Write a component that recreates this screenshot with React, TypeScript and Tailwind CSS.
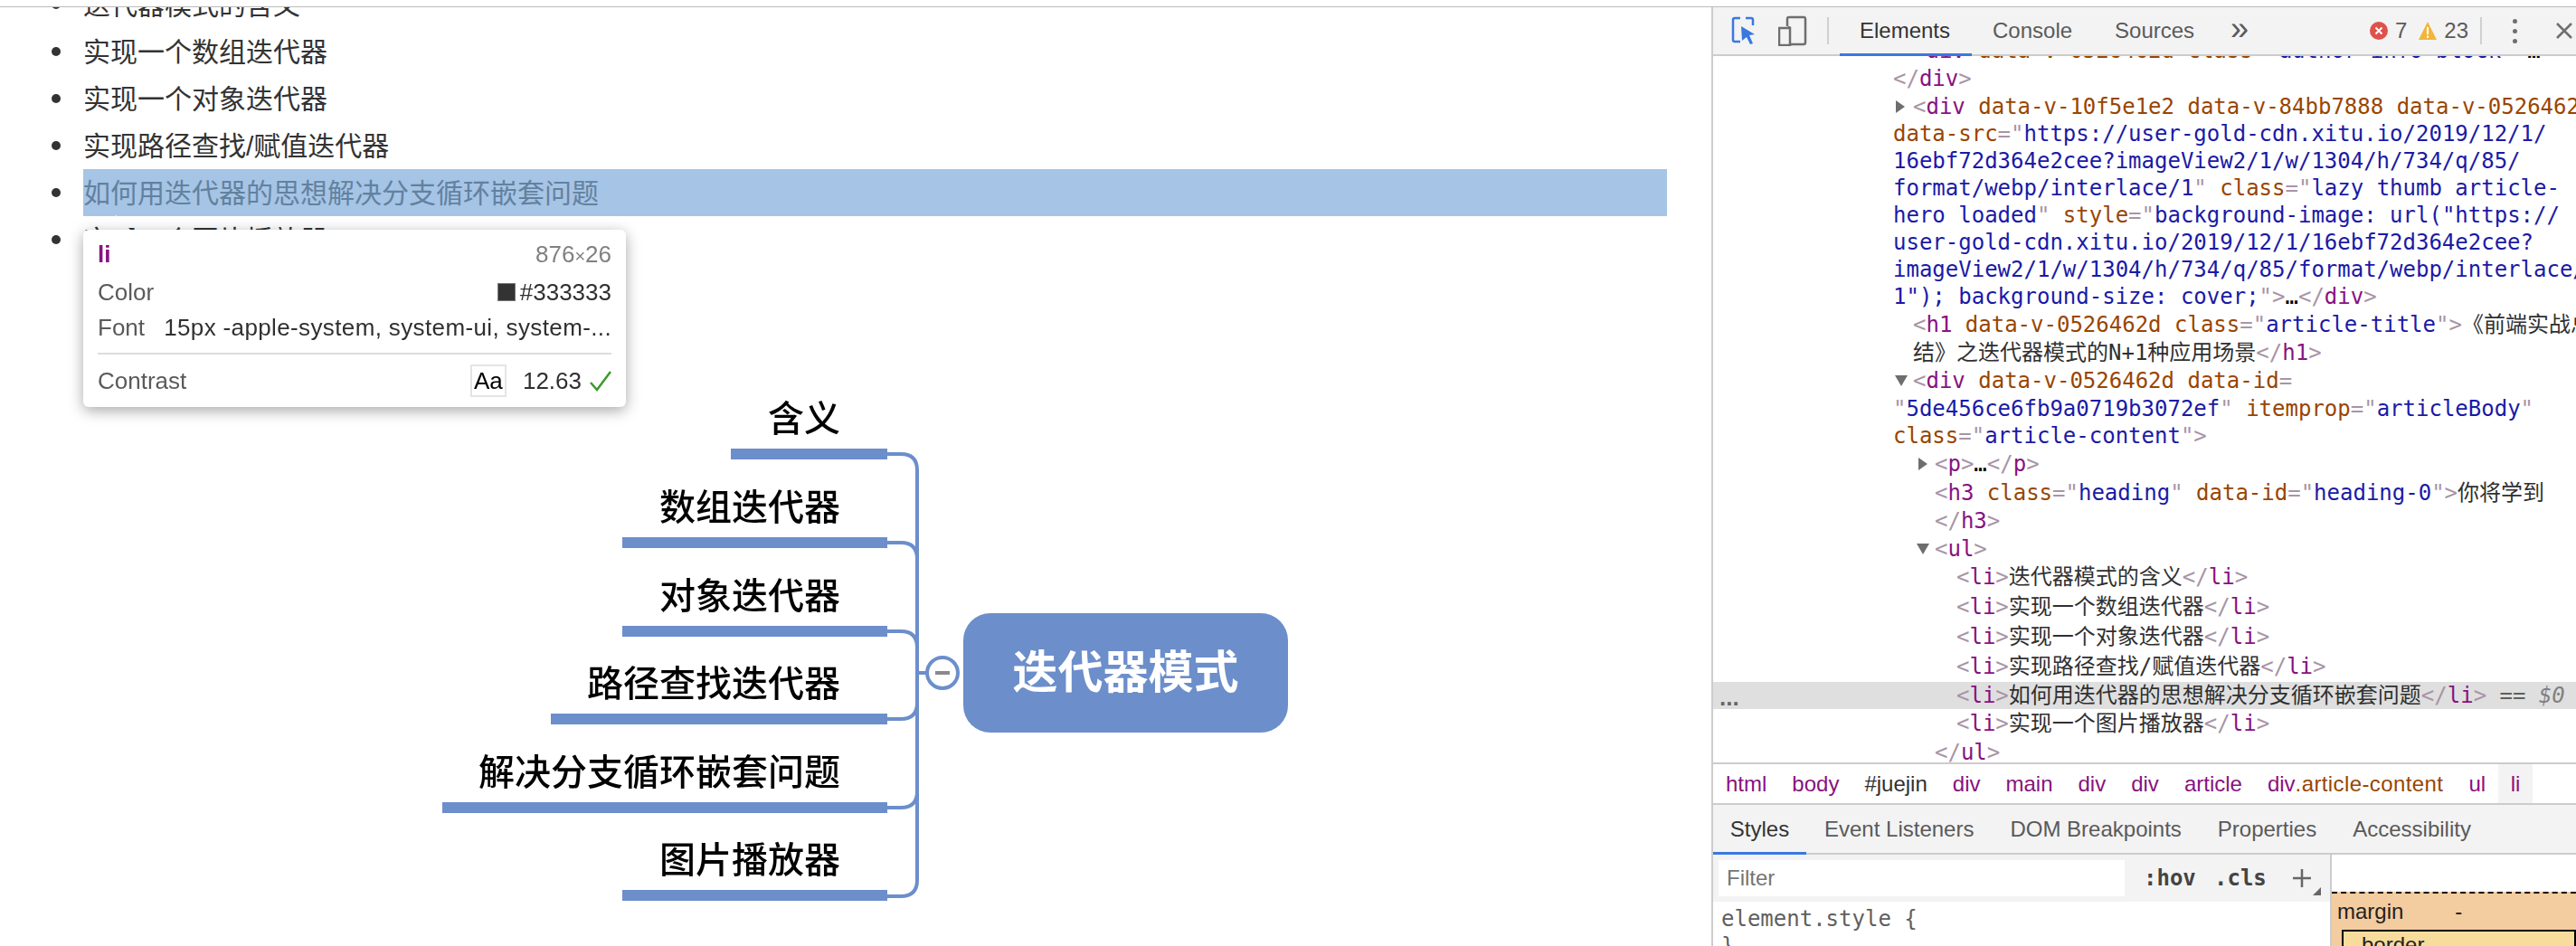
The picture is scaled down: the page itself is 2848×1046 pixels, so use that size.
import React from "react";

const sans = "[font-family:'Liberation_Sans','Noto_Sans_CJK_SC',sans-serif]";

const P = ({ children }: { children: React.ReactNode }) => <span className="text-[#a894a6]">{children}</span>;
const G = ({ children }: { children: React.ReactNode }) => <span className="text-[#881280]">{children}</span>;
const A = ({ children }: { children: React.ReactNode }) => <span className="text-[#994500]">{children}</span>;
const V = ({ children }: { children: React.ReactNode }) => <span className="text-[#1a1aa6]">{children}</span>;
const X = ({ children }: { children: React.ReactNode }) => <span className="text-[#303030]">{children}</span>;

const Li = ({ t }: { t: string }) => (
  <>
    <P>&lt;</P><G>li</G><P>&gt;</P><X>{t}</X><P>&lt;/</P><G>li</G><P>&gt;</P>
  </>
);

type Line = { h: string; x: string; n: React.ReactNode; arrow?: "r" | "d"; ax?: string; sel?: boolean };

const lines: Line[] = [
  { h: "h-[30px]", x: "pl-[221px]", n: <><P>&lt;</P><G>div</G> <A>data-v-0526462d</A> <A>class</A><P>="</P><V>author-info-block</V><P>"&gt;</P>…</> },
  { h: "h-[31px]", x: "pl-[199px]", n: <><P>&lt;/</P><G>div</G><P>&gt;</P></> },
  { h: "h-[31px]", x: "pl-[221px]", arrow: "r", ax: "left-[202px]", n: <><P>&lt;</P><G>div</G> <A>data-v-10f5e1e2</A> <A>data-v-84bb7888</A> <A>data-v-0526462d</A></> },
  { h: "h-[30px]", x: "pl-[199px]", n: <><A>data-src</A><P>="</P><V>https://user-gold-cdn.xitu.io/2019/12/1/</V></> },
  { h: "h-[30px]", x: "pl-[199px]", n: <V>16ebf72d364e2cee?imageView2/1/w/1304/h/734/q/85/</V> },
  { h: "h-[30px]", x: "pl-[199px]", n: <><V>format/webp/interlace/1</V><P>"</P> <A>class</A><P>="</P><V>lazy thumb article-</V></> },
  { h: "h-[30px]", x: "pl-[199px]", n: <><V>hero loaded</V><P>"</P> <A>style</A><P>="</P><V>background-image: url("https://</V></> },
  { h: "h-[30px]", x: "pl-[199px]", n: <V>user-gold-cdn.xitu.io/2019/12/1/16ebf72d364e2cee?</V> },
  { h: "h-[30px]", x: "pl-[199px]", n: <V>imageView2/1/w/1304/h/734/q/85/format/webp/interlace/</V> },
  { h: "h-[30px]", x: "pl-[199px]", n: <><V>1"); background-size: cover;</V><P>"&gt;</P>…<P>&lt;/</P><G>div</G><P>&gt;</P></> },
  { h: "h-[32px]", x: "pl-[221px]", n: <><P>&lt;</P><G>h1</G> <A>data-v-0526462d</A> <A>class</A><P>="</P><V>article-title</V><P>"&gt;</P><X>《前端实战总</X></> },
  { h: "h-[30px]", x: "pl-[221px]", n: <><X>结》之迭代器模式的N+1种应用场景</X><P>&lt;/</P><G>h1</G><P>&gt;</P></> },
  { h: "h-[32px]", x: "pl-[221px]", arrow: "d", ax: "left-[201px]", n: <><P>&lt;</P><G>div</G> <A>data-v-0526462d</A> <A>data-id</A><P>=</P></> },
  { h: "h-[30px]", x: "pl-[199px]", n: <><P>"</P><V>5de456ce6fb9a0719b3072ef</V><P>"</P> <A>itemprop</A><P>="</P><V>articleBody</V><P>"</P></> },
  { h: "h-[30px]", x: "pl-[199px]", n: <><A>class</A><P>="</P><V>article-content</V><P>"&gt;</P></> },
  { h: "h-[32px]", x: "pl-[245px]", arrow: "r", ax: "left-[227px]", n: <><P>&lt;</P><G>p</G><P>&gt;</P>…<P>&lt;/</P><G>p</G><P>&gt;</P></> },
  { h: "h-[31px]", x: "pl-[245px]", n: <><P>&lt;</P><G>h3</G> <A>class</A><P>="</P><V>heading</V><P>"</P> <A>data-id</A><P>="</P><V>heading-0</V><P>"&gt;</P><X>你将学到</X></> },
  { h: "h-[31px]", x: "pl-[245px]", n: <><P>&lt;/</P><G>h3</G><P>&gt;</P></> },
  { h: "h-[31px]", x: "pl-[245px]", arrow: "d", ax: "left-[225px]", n: <><P>&lt;</P><G>ul</G><P>&gt;</P></> },
  { h: "h-[32px]", x: "pl-[269px]", n: <Li t="迭代器模式的含义" /> },
  { h: "h-[33px]", x: "pl-[269px]", n: <Li t="实现一个数组迭代器" /> },
  { h: "h-[33px]", x: "pl-[269px]", n: <Li t="实现一个对象迭代器" /> },
  { h: "h-[34px]", x: "pl-[269px]", n: <Li t="实现路径查找/赋值迭代器" /> },
  { h: "h-[30px]", x: "pl-[269px]", sel: true, n: <><Li t="如何用迭代器的思想解决分支循环嵌套问题" /><span className="text-[#5f5f5f]"> == </span><span className="text-[#808080] italic">$0</span></> },
  { h: "h-[32px]", x: "pl-[269px]", n: <Li t="实现一个图片播放器" /> },
  { h: "h-[32px]", x: "pl-[245px]", n: <><P>&lt;/</P><G>ul</G><P>&gt;</P></> },
];

const items = [
  "迭代器模式的含义",
  "实现一个数组迭代器",
  "实现一个对象迭代器",
  "实现路径查找/赋值迭代器",
  "如何用迭代器的思想解决分支循环嵌套问题",
  "实现一个图片播放器",
];

const nodes = [
  { label: "含义", w: "w-[173px]", top: "top-[5px]" },
  { label: "数组迭代器", w: "w-[293px]", top: "top-[103px]" },
  { label: "对象迭代器", w: "w-[293px]", top: "top-[201px]" },
  { label: "路径查找迭代器", w: "w-[372px]", top: "top-[298px]" },
  { label: "解决分支循环嵌套问题", w: "w-[492px]", top: "top-[396px]" },
  { label: "图片播放器", w: "w-[293px]", top: "top-[493px]" },
];

function Diagram() {
  return (
    <div className="relative ml-[480px] mt-[139px] w-[960px] h-[600px] blur-[0.5px]">
      <svg className="absolute left-0 top-0" width="960" height="600" viewBox="480 430 960 600" fill="none">
        <path
          d="M981 502H996Q1014 502 1014 520V973Q1014 991 996 991H981M981 600H996Q1014 600 1014 618M981 698H996Q1014 698 1014 716M981 795H996Q1014 795 1014 777M981 893H996Q1014 893 1014 875M1014 744H1024"
          stroke="#6c8ecb"
          strokeWidth="4"
        />
        <ellipse cx="1042" cy="744" rx="17" ry="17" stroke="#6c8ecb" strokeWidth="4" fill="#fff" />
        <path d="M1034 744H1050" stroke="#8a8a8a" strokeWidth="4" />
      </svg>
      {nodes.map((n) => (
        <div key={n.label} className={`absolute left-0 w-[501px] flex flex-col items-end ${n.top}`}>
          <div className="h-[56px] w-full flex items-center justify-end pr-[52px] text-[40px] leading-none font-medium text-black whitespace-nowrap">
            {n.label}
          </div>
          <div className={`h-[12px] bg-[#6c8ecb] mt-[5px] ${n.w}`} />
        </div>
      ))}
      <div className="absolute left-[585px] top-[248px] w-[359px] h-[132px] rounded-[30px] bg-[#6c8ecb] flex items-center justify-center text-white text-[50px] font-bold leading-none">
        迭代器模式
      </div>
    </div>
  );
}

function Tooltip() {
  return (
    <>
      <div className="absolute left-[112px] top-[230px] w-0 h-0 border-l-[16px] border-r-[16px] border-b-[16px] border-l-transparent border-r-transparent border-b-white z-10" />
      <div className="absolute left-[92px] top-[246px] w-[600px] h-[196px] bg-white rounded-[6px] shadow-[0_4px_16px_rgba(0,0,0,0.35)] px-[16px] pt-[10px] text-[26px] text-[#5a5a5a] z-10">
        <div className="h-[34px] flex items-center justify-between">
          <span className="text-[#881280] font-bold">li</span>
          <span className="text-[#808080]">876<span className="text-[20px]">×</span>26</span>
        </div>
        <div className="h-[40px] mt-[5px] flex items-center justify-between">
          <span>Color</span>
          <span className="flex items-center gap-[5px] text-[#303030]">
            <span className="w-[20px] h-[20px] bg-[#333333] border border-[#777]" />
            #333333
          </span>
        </div>
        <div className="h-[38px] flex items-center justify-between whitespace-nowrap">
          <span>Font</span>
          <span className="text-[#303030] tracking-[0.37px]">15px -apple-system, system-ui, system-...</span>
        </div>
        <div className="h-[2px] bg-[#dcdcdc] mt-[9px]" />
        <div className="h-[36px] mt-[11px] flex items-center">
          <span>Contrast</span>
          <span className="ml-auto w-[40px] h-[36px] border-2 border-[#e4e4e4] flex items-center justify-center text-black text-[26px]">Aa</span>
          <span className="ml-[18px] text-[#303030]">12.63</span>
          <svg className="ml-[9px]" width="24" height="24" viewBox="0 0 24 24" fill="none">
            <path d="M1 14L8 22L23 2" stroke="#3c9a2c" strokeWidth="2.5" />
          </svg>
        </div>
      </div>
    </>
  );
}

function Toolbar() {
  return (
    <div className={`relative z-10 h-[54px] shrink-0 bg-[#f3f3f3] border-b-2 border-[#cccccc] flex items-center text-[24px] text-[#5a5a5a] ${sans}`}>
      <svg className="ml-[20px]" width="28" height="32" viewBox="0 0 28 32" fill="none">
        <path d="M10 2H4a2 2 0 0 0-2 2V26a2 2 0 0 0 2 2h6M16 2h6a2 2 0 0 1 2 2v6" stroke="#3a78e0" strokeWidth="2.5" />
        <path d="M11 11L26 20L20 21L24 30L21 31L17 23L12 27Z" fill="#3a78e0" />
      </svg>
      <svg className="ml-[24px]" width="32" height="34" viewBox="0 0 32 34" fill="none">
        <path d="M10 12V4a2 2 0 0 1 2-2H29a2 2 0 0 1 1 2V30a2 2 0 0 1-2 2H12V12" stroke="#6e6e6e" strokeWidth="2.5" />
        <rect x="1" y="14" width="12" height="19" fill="#f3f3f3" stroke="#6e6e6e" strokeWidth="2.5" />
      </svg>
      <div className="ml-[22px] w-[2px] h-[30px] bg-[#d0d0d0]" />
      <div className="relative ml-[12px] w-[146px] h-full flex items-center justify-center text-[#333333]">
        <span className="ml-[-2px]">Elements</span>
        <div className="absolute left-0 right-0 bottom-[-2px] h-[3px] bg-[#3a78e0]" />
      </div>
      <span className="ml-[23px]">Console</span>
      <span className="ml-[47px]">Sources</span>
      <span className="ml-[40px] text-[36px] leading-none mt-[-5px]">»</span>
      <div className="ml-auto flex items-center h-full">
        <svg width="20" height="20" viewBox="0 0 20 20">
          <circle cx="10" cy="10" r="10" fill="#e0514c" />
          <path d="M6.5 6.5L13.5 13.5M13.5 6.5L6.5 13.5" stroke="#fff" strokeWidth="2" />
        </svg>
        <span className="ml-[8px]">7</span>
        <svg className="ml-[13px]" width="20" height="20" viewBox="0 0 20 20">
          <path d="M10 0L20 20H0Z" fill="#f2b53c" />
          <path d="M10 6V14M10 15.5V18" stroke="#fff" strokeWidth="2" />
        </svg>
        <span className="ml-[8px]">23</span>
        <div className="ml-[13px] w-[2px] h-[30px] bg-[#d0d0d0]" />
        <div className="ml-[34px] flex flex-col gap-[6px]">
          <span className="w-[5px] h-[5px] rounded-full bg-[#6e6e6e]" />
          <span className="w-[5px] h-[5px] rounded-full bg-[#6e6e6e]" />
          <span className="w-[5px] h-[5px] rounded-full bg-[#6e6e6e]" />
        </div>
        <svg className="ml-[42px] mr-[3px]" width="20" height="20" viewBox="0 0 20 20">
          <path d="M2 2L18 18M18 2L2 18" stroke="#6e6e6e" strokeWidth="2.5" />
        </svg>
      </div>
    </div>
  );
}

function Code() {
  return (
    <div className="relative h-[781px] shrink-0 overflow-hidden text-[24px] [font-family:'DejaVu_Sans_Mono','Noto_Sans_CJK_SC',monospace]">
      <div className="mt-[-21px]">
        {lines.map((l, i) => (
          <div key={i} className={`relative flex items-center whitespace-pre ${l.h} ${l.x} ${l.sel ? "bg-[#dfdfdf]" : ""}`}>
            {l.arrow === "r" && <span className={`absolute w-0 h-0 border-y-[7px] border-y-transparent border-l-[10px] border-l-[#6e6e6e] ${l.ax}`} />}
            {l.arrow === "d" && <span className={`absolute w-0 h-0 border-x-[7px] border-x-transparent border-t-[12px] border-t-[#6e6e6e] ${l.ax}`} />}
            {l.sel && <span className="absolute left-[4px] top-[8px] text-[#666] leading-none font-bold text-[22px] tracking-[-6px]">...</span>}
            <span>{l.n}</span>
          </div>
        ))}
      </div>
    </div>
  );
}

function Breadcrumbs() {
  const c = [
    <span className="text-[#881280]">html</span>,
    <span className="text-[#881280]">body</span>,
    <span className="text-[#303030]">#juejin</span>,
    <span className="text-[#881280]">div</span>,
    <span className="text-[#881280]">main</span>,
    <span className="text-[#881280]">div</span>,
    <span className="text-[#881280]">div</span>,
    <span className="text-[#881280]">article</span>,
    <span className="text-[#881280]">div<span className="text-[#994500] tracking-[0.4px]">.article-content</span></span>,
    <span className="text-[#881280]">ul</span>,
  ];
  return (
    <div className={`h-[47px] shrink-0 border-y-2 border-[#cccccc] bg-white flex items-center pl-[14px] gap-[28px] text-[24px] ${sans}`}>
      {c.map((e, i) => (
        <React.Fragment key={i}>{e}</React.Fragment>
      ))}
      <span className="h-full w-[38px] ml-[-14px] bg-[#f3f3f3] flex items-center justify-center text-[#881280]">li</span>
    </div>
  );
}

function StylesTabs() {
  return (
    <div className={`h-[55px] shrink-0 bg-[#f3f3f3] border-b-2 border-[#cccccc] flex items-center text-[24px] text-[#5a5a5a] ${sans}`}>
      <div className="relative w-[103px] h-full flex items-center justify-center text-[#333333]">
        Styles
        <div className="absolute left-0 right-0 bottom-[-2px] h-[3px] bg-[#3a78e0]" />
      </div>
      <span className="ml-[20px]">Event Listeners</span>
      <span className="ml-[40px]">DOM Breakpoints</span>
      <span className="ml-[40px]">Properties</span>
      <span className="ml-[40px]">Accessibility</span>
    </div>
  );
}

function StylesPane() {
  const mono = "[font-family:'DejaVu_Sans_Mono',monospace]";
  return (
    <div className="flex-1 flex min-h-0 overflow-hidden">
      <div className="w-[682px] shrink-0 bg-white">
        <div className="h-[52px] bg-[#f3f3f3] relative flex items-center">
          <div className={`ml-[6px] w-[449px] h-[40px] bg-white flex items-center pl-[9px] text-[24px] text-[#757575] ${sans}`}>Filter</div>
          <span className={`absolute left-[476px] text-[24px] font-bold text-[#444] ${mono}`}>:hov</span>
          <span className={`absolute left-[554px] text-[24px] font-bold text-[#444] ${mono}`}>.cls</span>
          <svg className="absolute left-[640px] top-[15px]" width="22" height="22" viewBox="0 0 22 22">
            <path d="M11 1V21M1 11H21" stroke="#666" strokeWidth="2.5" />
          </svg>
          <span className="absolute left-[663px] top-[36px] w-0 h-0 border-l-[9px] border-l-transparent border-b-[9px] border-b-[#666]" />
        </div>
        <div className={`pl-[9px] pt-[4px] text-[24px] leading-[30px] text-[#5f5f5f] ${mono}`}>
          <div>element.style {"{"}</div>
          <div>{"}"}</div>
        </div>
      </div>
      <div className="flex-1 border-l-2 border-[#cccccc] bg-white pt-[41px]">
        <div className={`h-full border-t-2 border-dashed border-black bg-[#f3cc9f] pl-[6px] text-[24px] text-[#222] ${sans}`}>
          <div className="h-[40px] flex items-center">
            margin<span className="ml-[57px]">-</span>
          </div>
          <div className="ml-[5px] h-[40px] border-2 border-black bg-[#f7dc9c] pl-[20px] leading-[30px]">border</div>
        </div>
      </div>
    </div>
  );
}

export default function App() {
  return (
    <div className={`w-[2848px] h-[1046px] bg-white overflow-hidden flex flex-col ${sans}`}>
      <div className="h-[8px] shrink-0 border-b border-[#bbbbbb]" />
      <div className="flex-1 flex min-h-0">
        <main className="relative w-[1892px] shrink-0 overflow-hidden text-[#333333]">
          <ul className="list-disc ml-[92px] mr-[49px] mt-[-29px] text-[30px]">
            {items.map((t, i) => (
              <li key={t} className={`h-[52px] flex items-center relative ${i === 4 ? "bg-[#a6c4e5] text-[#62819f]" : ""}`}>
                <span className="absolute left-[-35px] w-[10px] h-[10px] rounded-full bg-[#333333]" />
                {t}
              </li>
            ))}
          </ul>
          <Tooltip />
          <Diagram />
        </main>
        <aside className="flex-1 min-w-0 border-l-2 border-[#cccccc] flex flex-col overflow-hidden">
          <Toolbar />
          <Code />
          <Breadcrumbs />
          <StylesTabs />
          <StylesPane />
        </aside>
      </div>
    </div>
  );
}
